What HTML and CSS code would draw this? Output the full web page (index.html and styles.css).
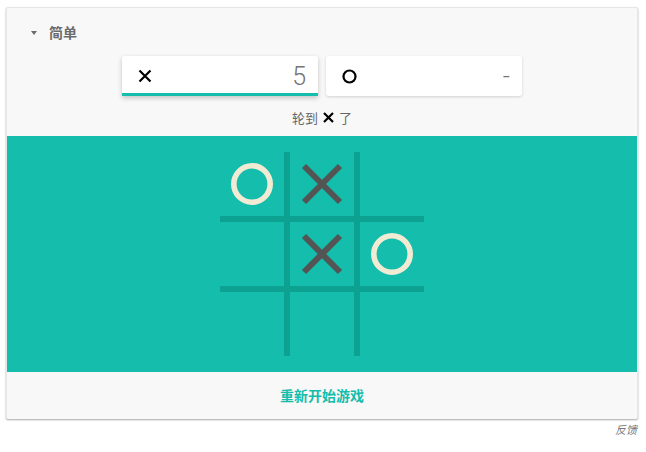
FILE: index.html
```html
<!DOCTYPE html>
<html lang="zh-CN">
<head>
<meta charset="utf-8">
<link rel="stylesheet" href="styles.css">
</head>
<body>
<div class="card">
  <div class="header">
    <span class="caret"></span>
    <span class="level">简单</span>
  </div>
  <div class="scores">
    <div class="score active">
      <svg class="icon" width="14" height="14" viewBox="0 0 14 14"><path d="M1.5 1.5 L12.5 12.5 M12.5 1.5 L1.5 12.5" stroke="#000" stroke-width="2.2" fill="none"/></svg>
      <span class="num">5</span>
    </div>
    <div class="score">
      <svg class="icon" width="15" height="15" viewBox="0 0 15 15"><circle cx="7.5" cy="7.5" r="6" stroke="#000" stroke-width="2.2" fill="none"/></svg>
      <span class="num dash">-</span>
    </div>
  </div>
  <div class="status"><span>轮到</span><svg class="turn" width="11" height="11" viewBox="0 0 11 11"><path d="M1 1 L10 10 M10 1 L1 10" stroke="#000" stroke-width="2.2" fill="none"/></svg><span>了</span></div>
  <div class="board-area">
    <div class="board">
      <div class="cell"><svg viewBox="0 0 64 64"><circle cx="32" cy="32" r="18.2" class="o"/></svg></div>
      <div class="cell"><svg viewBox="0 0 64 64"><path d="M14 14 L50 50 M50 14 L14 50" class="x"/></svg></div>
      <div class="cell"></div>
      <div class="cell"></div>
      <div class="cell"><svg viewBox="0 0 64 64"><path d="M14 14 L50 50 M50 14 L14 50" class="x"/></svg></div>
      <div class="cell"><svg viewBox="0 0 64 64"><circle cx="32" cy="32" r="18.2" class="o"/></svg></div>
      <div class="cell"></div>
      <div class="cell"></div>
      <div class="cell"></div>
    </div>
  </div>
  <div class="restart">重新开始游戏</div>
</div>
<div class="feedback">反馈</div>
</body>
</html>
```
FILE: styles.css
```css
html, body {
  margin: 0;
  padding: 0;
  background: #fff;
}
body {
  font-family: Roboto, Arial, "Noto Sans CJK SC", sans-serif;
  padding: 7px 8px 0 6px;
}
.card {
  background: #f8f8f8;
  border: 1px solid #e6e6e6;
  border-bottom: none;
  box-shadow: 0 1px 2px rgba(0,0,0,0.35);
  border-radius: 2px;
}
.header {
  height: 48px;
  display: flex;
  align-items: center;
  padding-left: 24px;
}
.caret {
  width: 0;
  height: 0;
  border-left: 3.5px solid transparent;
  border-right: 3.5px solid transparent;
  border-top: 4px solid #6b6b6b;
  margin-right: 12px;
  margin-top: 1px;
}
.level {
  font-family: "Noto Sans CJK SC", sans-serif;
  font-size: 14px;
  font-weight: bold;
  color: #6b6b6b;
}
.scores {
  display: flex;
  justify-content: center;
  gap: 8px;
}
.score {
  box-sizing: border-box;
  width: 196px;
  height: 40px;
  background: #fff;
  border-radius: 3px;
  box-shadow: 0 1px 3px rgba(0,0,0,0.16);
  display: flex;
  align-items: center;
  justify-content: space-between;
  padding: 0 12px 0 16px;
}
.score.active {
  border-bottom: 3px solid #14bdac;
  border-radius: 3px 3px 0 0;
  box-shadow: 0 2px 5px rgba(0,0,0,0.22);
  padding-top: 3px;
}
.num {
  font-size: 25px;
  font-weight: 300;
  color: #757575;
  line-height: 1;
}
.dash {
  margin-right: 0;
}
.status {
  height: 40px;
  display: flex;
  align-items: center;
  justify-content: center;
  gap: 4px;
  padding-top: 2px;
  box-sizing: border-box;
  font-family: "Noto Sans CJK SC", sans-serif;
  font-size: 13px;
  color: #666;
}
.turn {
  margin: 0 1px;
}
.board-area {
  background: #14bdac;
  height: 236px;
  display: flex;
  align-items: center;
  justify-content: center;
}
.board {
  display: grid;
  grid-template-columns: repeat(3, 64px);
  grid-template-rows: repeat(3, 64px);
  gap: 6px;
  background: #0da192;
}
.cell {
  background: #14bdac;
}
.cell svg {
  display: block;
  width: 64px;
  height: 64px;
}
.o {
  fill: none;
  stroke: #f2ebd3;
  stroke-width: 5.6;
}
.x {
  fill: none;
  stroke: #545454;
  stroke-width: 6;
}
.restart {
  height: 47px;
  line-height: 46px;
  text-align: center;
  font-family: "Noto Sans CJK SC", sans-serif;
  font-size: 14px;
  font-weight: bold;
  color: #14bdac;
}
.feedback {
  text-align: right;
  font-family: "Noto Sans CJK SC", sans-serif;
  font-style: italic;
  font-size: 11px;
  color: #777;
  padding-top: 2px;
  padding-right: 1px;
}
```
